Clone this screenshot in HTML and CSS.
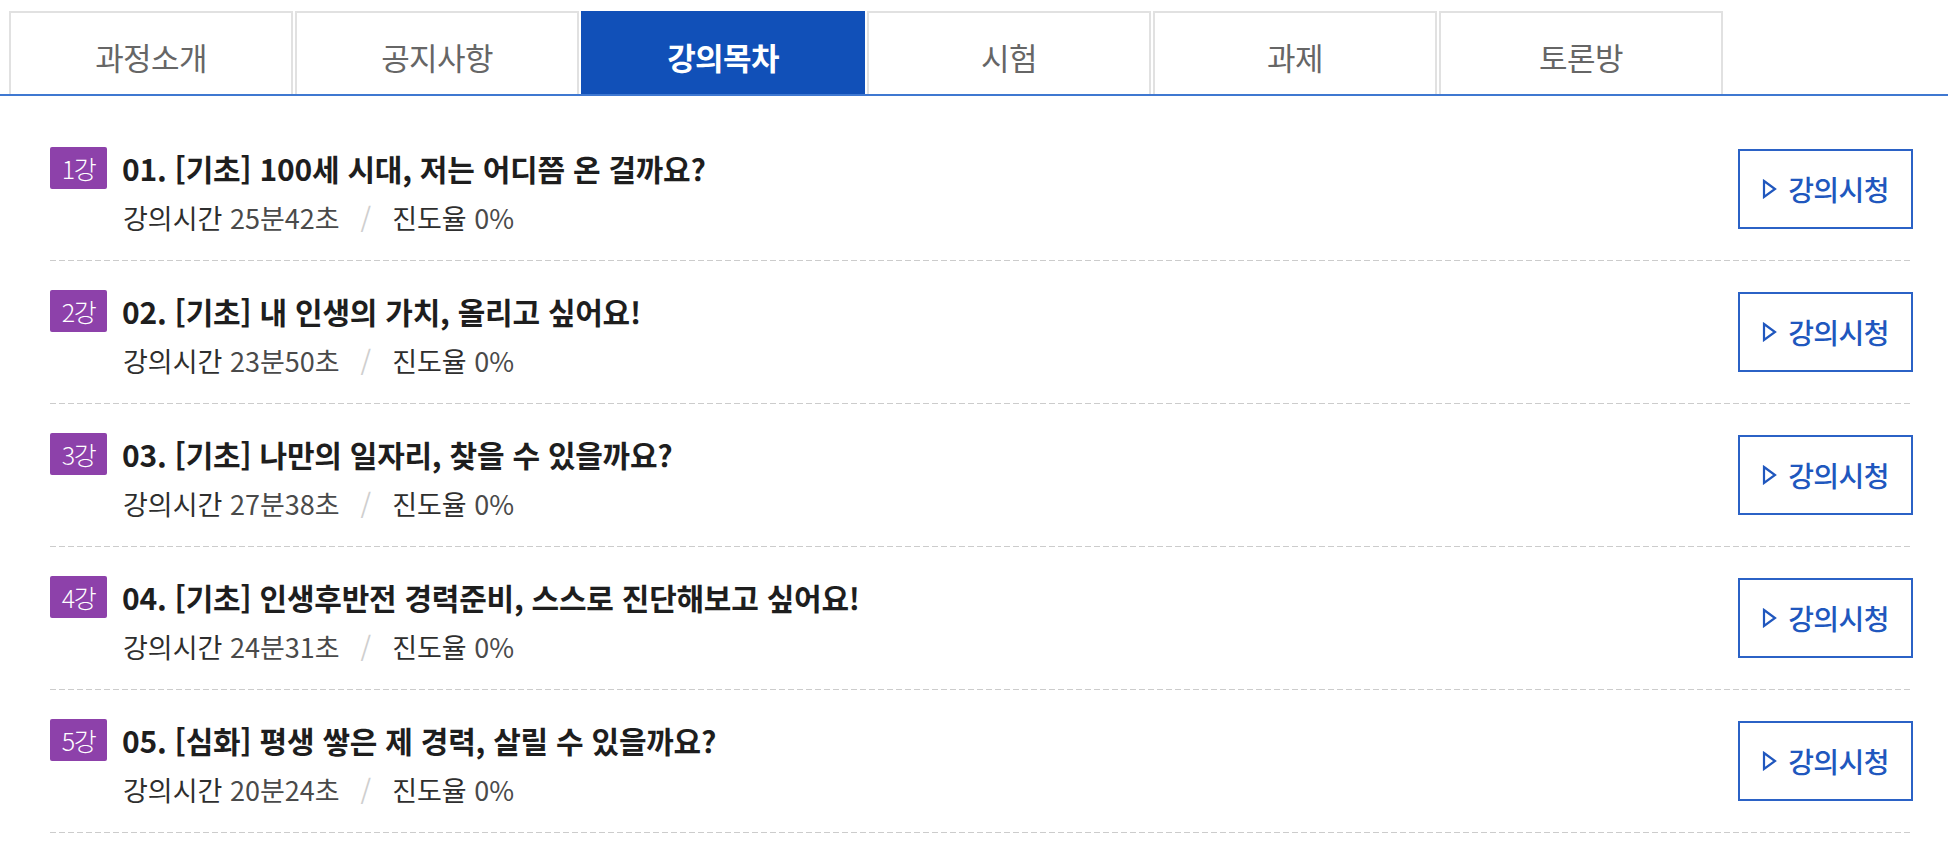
FILE: index.html
```html
<!DOCTYPE html>
<html lang="ko">
<head>
<meta charset="utf-8">
<title>강의목차</title>
<link rel="stylesheet" href="styles.css">
</head>
<body>
<div class="page">
  <ul class="tabs">
    <li class="tab">과정소개</li>
    <li class="tab">공지사항</li>
    <li class="tab active">강의목차</li>
    <li class="tab">시험</li>
    <li class="tab">과제</li>
    <li class="tab">토론방</li>
  </ul>
  <ul class="lessons">
    <li class="lesson">
      <div class="info">
        <div class="title-row"><span class="badge">1강</span><span class="title">01. [기초] 100세 시대, 저는 어디쯤 온 걸까요?</span></div>
        <div class="meta"><span class="label">강의시간</span> <span class="value">25분42초</span><span class="sep">/</span><span class="label">진도율</span> <span class="value">0%</span></div>
      </div>
      <a class="watch" href="#"><svg class="play" viewBox="0 0 15 20" width="15" height="20"><path d="M2 2 L13 10 L2 18 Z" fill="none" stroke="currentColor" stroke-width="2.2" stroke-linejoin="miter"/></svg><span>강의시청</span></a>
    </li>
    <li class="lesson">
      <div class="info">
        <div class="title-row"><span class="badge">2강</span><span class="title">02. [기초] 내 인생의 가치, 올리고 싶어요!</span></div>
        <div class="meta"><span class="label">강의시간</span> <span class="value">23분50초</span><span class="sep">/</span><span class="label">진도율</span> <span class="value">0%</span></div>
      </div>
      <a class="watch" href="#"><svg class="play" viewBox="0 0 15 20" width="15" height="20"><path d="M2 2 L13 10 L2 18 Z" fill="none" stroke="currentColor" stroke-width="2.2" stroke-linejoin="miter"/></svg><span>강의시청</span></a>
    </li>
    <li class="lesson">
      <div class="info">
        <div class="title-row"><span class="badge">3강</span><span class="title">03. [기초] 나만의 일자리, 찾을 수 있을까요?</span></div>
        <div class="meta"><span class="label">강의시간</span> <span class="value">27분38초</span><span class="sep">/</span><span class="label">진도율</span> <span class="value">0%</span></div>
      </div>
      <a class="watch" href="#"><svg class="play" viewBox="0 0 15 20" width="15" height="20"><path d="M2 2 L13 10 L2 18 Z" fill="none" stroke="currentColor" stroke-width="2.2" stroke-linejoin="miter"/></svg><span>강의시청</span></a>
    </li>
    <li class="lesson">
      <div class="info">
        <div class="title-row"><span class="badge">4강</span><span class="title">04. [기초] 인생후반전 경력준비, 스스로 진단해보고 싶어요!</span></div>
        <div class="meta"><span class="label">강의시간</span> <span class="value">24분31초</span><span class="sep">/</span><span class="label">진도율</span> <span class="value">0%</span></div>
      </div>
      <a class="watch" href="#"><svg class="play" viewBox="0 0 15 20" width="15" height="20"><path d="M2 2 L13 10 L2 18 Z" fill="none" stroke="currentColor" stroke-width="2.2" stroke-linejoin="miter"/></svg><span>강의시청</span></a>
    </li>
    <li class="lesson">
      <div class="info">
        <div class="title-row"><span class="badge">5강</span><span class="title">05. [심화] 평생 쌓은 제 경력, 살릴 수 있을까요?</span></div>
        <div class="meta"><span class="label">강의시간</span> <span class="value">20분24초</span><span class="sep">/</span><span class="label">진도율</span> <span class="value">0%</span></div>
      </div>
      <a class="watch" href="#"><svg class="play" viewBox="0 0 15 20" width="15" height="20"><path d="M2 2 L13 10 L2 18 Z" fill="none" stroke="currentColor" stroke-width="2.2" stroke-linejoin="miter"/></svg><span>강의시청</span></a>
    </li>
  </ul>
</div>
</body>
</html>
```

FILE: styles.css
```css
* { box-sizing: border-box; }

body {
  margin: 0;
  background: #fff;
  font-family: "Noto Sans CJK KR", "Noto Sans", sans-serif;
  color: #222;
}

.page {
  width: 1948px;
}

.tabs {
  list-style: none;
  margin: 0;
  padding: 11px 0 0 9px;
  display: flex;
  gap: 2px;
  border-bottom: 2px solid #3f78d1;
}

.tab {
  width: 284px;
  height: 83px;
  border: 2px solid #e1e1e1;
  border-bottom: none;
  display: flex;
  align-items: center;
  justify-content: center;
  padding-top: 5px;
  font-size: 31px;
  color: #666;
  letter-spacing: -0.6px;
}

.tab.active {
  background: #1150b8;
  border-color: #1150b8;
  color: #fff;
  font-weight: 700;
}

.lessons {
  list-style: none;
  margin: 22px 35px 0 50px;
  padding: 0;
}

.lesson {
  height: 143px;
  display: flex;
  align-items: center;
  justify-content: space-between;
  background-image: linear-gradient(to right, #cccccc 6px, transparent 6px);
  background-size: 9px 1px;
  background-repeat: repeat-x;
  background-position: left bottom;
}

.info {
  align-self: flex-start;
  padding-top: 29px;
}

.title-row {
  display: flex;
  align-items: center;
  gap: 15px;
  height: 42px;
}

.badge {
  width: 57px;
  height: 42px;
  border-radius: 2px;
  background: #8d41aa;
  color: #fff;
  font-size: 25px;
  font-weight: 300;
  display: flex;
  align-items: center;
  justify-content: center;
  letter-spacing: -1.5px;
}

.title {
  font-size: 30px;
  font-weight: 700;
  color: #1e1e1e;
  letter-spacing: -0.25px;
}

.meta {
  margin: 9px 0 0 73px;
  line-height: 40px;
  font-size: 27px;
  letter-spacing: 0;
}

.meta .label {
  color: #2e2e2e;
}

.meta .value {
  color: #4a4a4a;
}

.meta .sep {
  color: #cfcfcf;
  margin: 0 21px;
}

.watch {
  width: 175px;
  height: 80px;
  margin-top: -2px;
  border: 2px solid #2b62c6;
  display: flex;
  align-items: center;
  justify-content: center;
  gap: 11px;
  color: #2057be;
  text-decoration: none;
  font-size: 28px;
  font-weight: 500;
  letter-spacing: -0.6px;
}

.play {
  display: block;
}
```
